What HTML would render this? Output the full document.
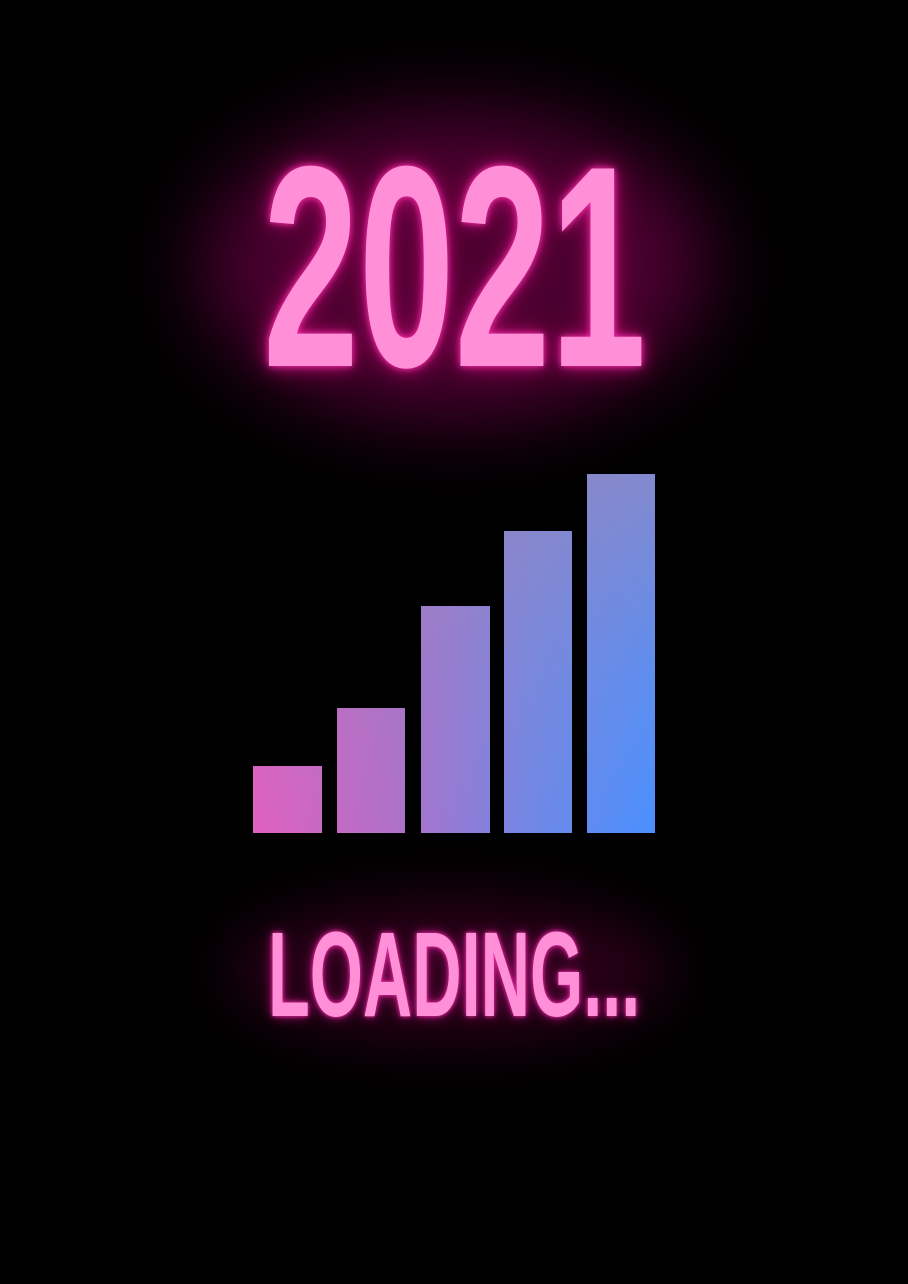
<!DOCTYPE html>
<html><head><meta charset="utf-8"><style>
html,body{margin:0;padding:0;background:#000;width:908px;height:1284px;overflow:hidden;position:relative}
.t{position:absolute;left:0;font-family:"Liberation Sans",sans-serif;font-weight:bold;color:#ff90d8;line-height:1;white-space:nowrap;transform-origin:0 0}
.glow{position:absolute;border-radius:50%;filter:blur(40px)}
.bar{position:absolute;bottom:451px;background:linear-gradient(to bottom,rgba(150,135,190,0.75) 0%,rgba(150,135,190,0.25) 55%,rgba(150,135,190,0) 100%),linear-gradient(to right,#e060c0 0%,#b070c8 35%,#6f88e6 70%,#4a90ff 100%);background-size:402px 359px,402px 359px}
</style></head><body>
<div class="glow" style="left:200px;top:110px;width:510px;height:310px;background:#4a0030"></div>
<div class="glow" style="left:230px;top:900px;width:440px;height:140px;background:#2a0018;filter:blur(30px)"></div>
<div class="t" style="top:123px;left:263px;font-size:287px;transform:scaleX(0.6);text-shadow:0 0 8px #ff30b0,0 0 20px #c0107a,0 0 40px #80004a">2021</div>
<div class="t" style="top:914px;left:268px;font-size:121px;transform:scaleX(0.565);text-shadow:0 0 6px #ff30b0,0 0 16px #b0107a">LOADING...</div>
<div class="bar" style="left:253px;width:69px;top:766px;background-position:0 -292px,0 -292px"></div>
<div class="bar" style="left:337px;width:68px;top:708px;background-position:-84px -234px,-84px -234px"></div>
<div class="bar" style="left:421px;width:69px;top:606px;background-position:-168px -132px,-168px -132px"></div>
<div class="bar" style="left:504px;width:68px;top:531px;background-position:-251px -57px,-251px -57px"></div>
<div class="bar" style="left:587px;width:68px;top:474px;background-position:-334px 0,-334px 0"></div>
</body></html>
